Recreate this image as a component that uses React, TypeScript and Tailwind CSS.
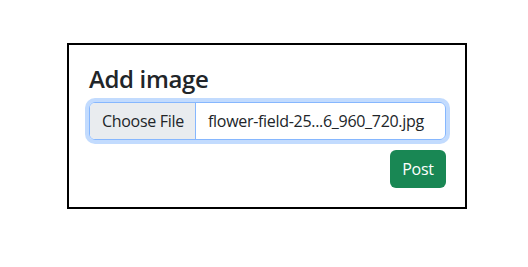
import React from "react";

export default function App() {
  return (
    <div
      className="min-h-[267px] bg-white pl-[67px] pt-[43px] text-[#212529]"
      style={{ fontFamily: '"Open Sans", "Noto Sans", sans-serif' }}
    >
      <div className="w-[400px] border-2 border-black pl-5 pr-[19px] pt-5 pb-[19px]">
        <h4 className="mb-2 text-[24px] font-semibold leading-[28.8px] tracking-[-0.35px]">Add image</h4>
        <div className="flex h-[38px] overflow-hidden rounded-[6px] border border-[#86b7fe] shadow-[0_0_0_4px_rgba(13,110,253,0.25)] text-[16px] tracking-[-0.3px]">
          <div className="flex w-[106px] shrink-0 items-center border-r border-[#86b7fe] bg-[#e9ecef] px-3 whitespace-nowrap">
            Choose File
          </div>
          <div className="flex items-center pl-3 whitespace-nowrap">flower-field-25...6_960_720.jpg</div>
        </div>
        <div className="mt-[10px] flex justify-end">
          <button className="flex h-[38px] w-[56px] items-center justify-center rounded-[6px] bg-[#198754] text-[16px] tracking-[-0.3px] text-white">
            Post
          </button>
        </div>
      </div>
    </div>
  );
}
